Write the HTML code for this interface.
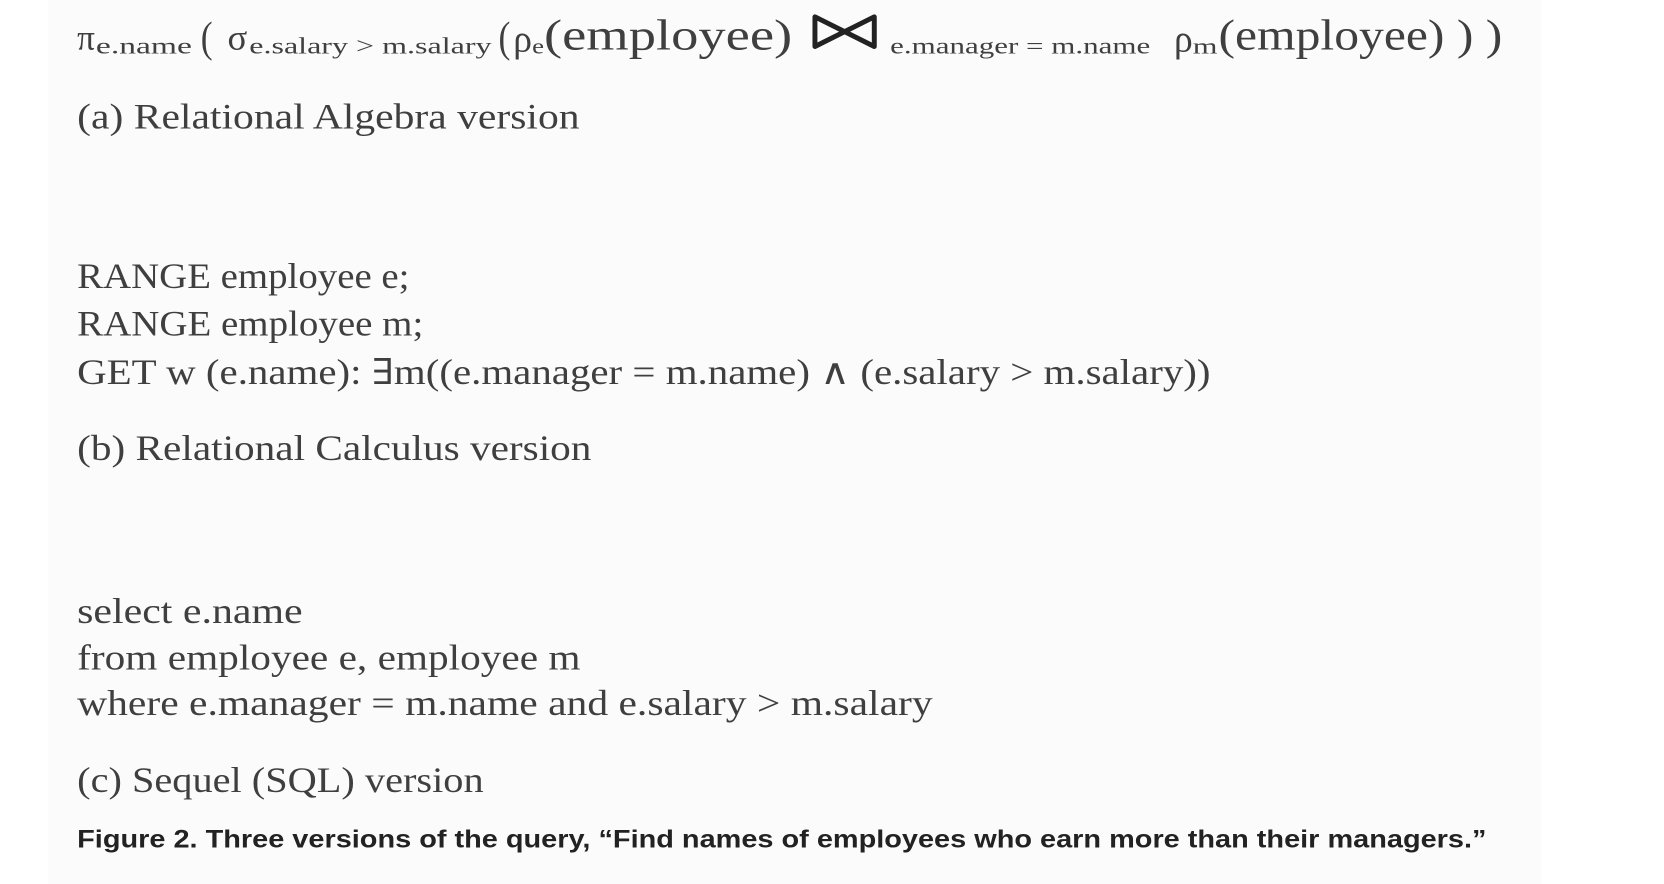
<!DOCTYPE html>
<html><head><meta charset="utf-8"><style>
html,body{margin:0;padding:0;background:#fff;width:1664px;height:884px;overflow:hidden}
svg{display:block}
text{font-family:"Liberation Serif","DejaVu Serif",serif;fill:#3f3f3f}
.s{font-family:"Liberation Sans",sans-serif;font-weight:bold;fill:#222}
</style></head><body>
<svg width="1664" height="884" viewBox="0 0 1664 884" xmlns="http://www.w3.org/2000/svg">
<g transform="translate(1,2) scale(0.989)">
<rect x="48" y="-5" width="1510" height="900" fill="#fbfbfb"/>
<text x="77" y="48" font-size="36" textLength="18" lengthAdjust="spacingAndGlyphs">π</text>
<text x="96" y="52" font-size="24" textLength="97" lengthAdjust="spacingAndGlyphs">e.name</text>
<text x="202" y="50" font-size="44" textLength="12" lengthAdjust="spacingAndGlyphs">(</text>
<text x="229" y="48" font-size="36" textLength="20" lengthAdjust="spacingAndGlyphs">σ</text>
<text x="251" y="52" font-size="24" textLength="245" lengthAdjust="spacingAndGlyphs">e.salary &gt; m.salary</text>
<text x="503" y="50" font-size="44" textLength="12" lengthAdjust="spacingAndGlyphs">(</text>
<text x="518" y="50" font-size="38" textLength="19" lengthAdjust="spacingAndGlyphs">ρ</text>
<text x="537" y="52" font-size="22" textLength="12" lengthAdjust="spacingAndGlyphs">e</text>
<text x="549" y="48" font-size="44" textLength="251" lengthAdjust="spacingAndGlyphs">(employee)</text>
<path d="M823 15 L823 45 L883 15 L883 45 Z" fill="none" stroke="#222" stroke-width="5" stroke-linejoin="round"/>
<text x="899" y="52" font-size="24" textLength="263" lengthAdjust="spacingAndGlyphs">e.manager = m.name</text>
<text x="1186" y="50" font-size="38" textLength="19" lengthAdjust="spacingAndGlyphs">ρ</text>
<text x="1205" y="52" font-size="22" textLength="25" lengthAdjust="spacingAndGlyphs">m</text>
<text x="1231" y="48" font-size="44" textLength="287" lengthAdjust="spacingAndGlyphs">(employee) ) )</text>

<text x="77" y="128" font-size="36" textLength="508" lengthAdjust="spacingAndGlyphs">(a) Relational Algebra version</text>
<text x="77" y="289" font-size="36" textLength="336" lengthAdjust="spacingAndGlyphs">RANGE employee e;</text>
<text x="77" y="337" font-size="36" textLength="350" lengthAdjust="spacingAndGlyphs">RANGE employee m;</text>
<text x="77" y="386" font-size="36" textLength="1146" lengthAdjust="spacingAndGlyphs">GET w (e.name): ∃m((e.manager = m.name) ∧ (e.salary &gt; m.salary))</text>
<text x="77" y="463" font-size="36" textLength="520" lengthAdjust="spacingAndGlyphs">(b) Relational Calculus version</text>
<text x="77" y="628" font-size="36" textLength="228" lengthAdjust="spacingAndGlyphs">select e.name</text>
<text x="77" y="675" font-size="36" textLength="509" lengthAdjust="spacingAndGlyphs">from employee e, employee m</text>
<text x="77" y="721" font-size="36" textLength="865" lengthAdjust="spacingAndGlyphs">where e.manager = m.name and e.salary &gt; m.salary</text>
<text x="77" y="799" font-size="36" textLength="411" lengthAdjust="spacingAndGlyphs">(c) Sequel (SQL) version</text>
<text class="s" x="77" y="855" font-size="25" textLength="1425" lengthAdjust="spacingAndGlyphs">Figure 2. Three versions of the query, “Find names of employees who earn more than their managers.”</text>
</g>
</svg>
</body></html>
